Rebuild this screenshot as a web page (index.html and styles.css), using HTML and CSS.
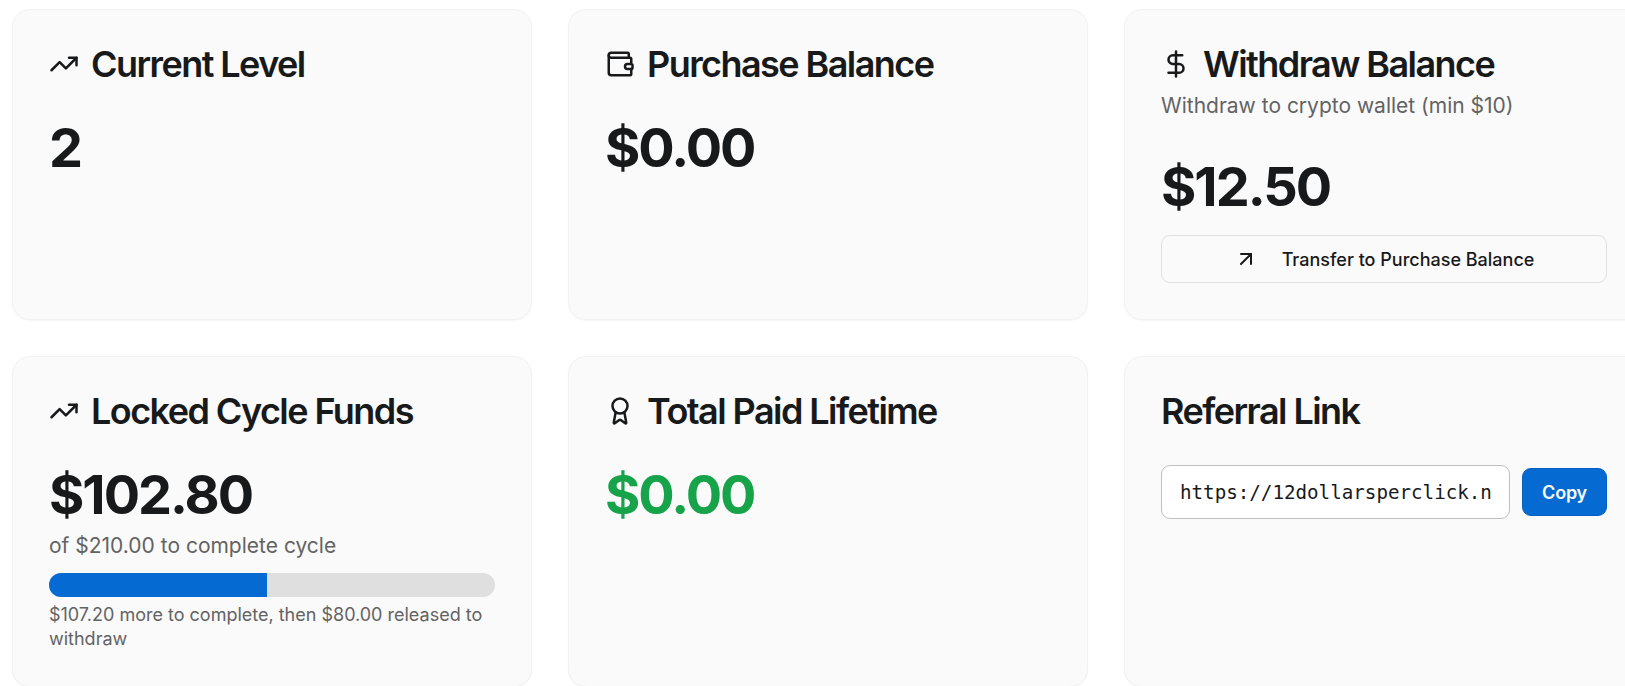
FILE: index.html
```
<!DOCTYPE html>
<html lang="en">
<head>
  <meta charset="UTF-8">
  <title>Dashboard</title>
  <link rel="stylesheet" href="styles.css">
</head>
<body>
  <div class="grid">
    <div class="card">
      <h3 class="title">
        <svg class="icon" viewBox="0 0 24 24"><path d="M22 7 13.5 15.5 8.5 10.5 2 17"/><path d="M16 7h6v6"/></svg>
        Current Level
      </h3>
      <div class="content">
        <div class="value">2</div>
      </div>
    </div>

    <div class="card">
      <h3 class="title">
        <svg class="icon" viewBox="0 0 24 24"><path d="M19 7V4a1 1 0 0 0-1-1H5a2 2 0 0 0 0 4h15a1 1 0 0 1 1 1v4h-3a2 2 0 0 0 0 4h3a1 1 0 0 0 1-1v-2a1 1 0 0 0-1-1"/><path d="M3 5v14a2 2 0 0 0 2 2h15a1 1 0 0 0 1-1v-4"/></svg>
        Purchase Balance
      </h3>
      <div class="content">
        <div class="value">$0.00</div>
      </div>
    </div>

    <div class="card">
      <h3 class="title">
        <svg class="icon" viewBox="0 0 24 24"><path d="M12 2v20"/><path d="M17 5H9.5a3.5 3.5 0 0 0 0 7h5a3.5 3.5 0 0 1 0 7H6"/></svg>
        Withdraw Balance
      </h3>
      <p class="description">Withdraw to crypto wallet (min $10)</p>
      <div class="content">
        <div class="value">$12.50</div>
        <button class="btn btn-outline">
          <svg class="icon-small" viewBox="0 0 24 24"><path d="M7 7h10v10"/><path d="M7 17 17 7"/></svg>
          Transfer to Purchase Balance
        </button>
      </div>
    </div>

    <div class="card">
      <h3 class="title">
        <svg class="icon" viewBox="0 0 24 24"><path d="M22 7 13.5 15.5 8.5 10.5 2 17"/><path d="M16 7h6v6"/></svg>
        Locked Cycle Funds
      </h3>
      <div class="content">
        <div class="value">$102.80</div>
        <p class="cycle">of $210.00 to complete cycle</p>
        <div class="progress"><div class="progress-bar" style="width: 48.95%"></div></div>
        <p class="note">$107.20 more to complete, then $80.00 released to withdraw</p>
      </div>
    </div>

    <div class="card">
      <h3 class="title">
        <svg class="icon" viewBox="0 0 24 24"><path d="m15.477 12.89 1.515 8.526a.5.5 0 0 1-.81.47l-3.58-2.687a1 1 0 0 0-1.197 0l-3.586 2.686a.5.5 0 0 1-.81-.469l1.514-8.526"/><circle cx="12" cy="8" r="6"/></svg>
        Total Paid Lifetime
      </h3>
      <div class="content">
        <div class="value green">$0.00</div>
      </div>
    </div>

    <div class="card">
      <h3 class="title">Referral Link</h3>
      <div class="content referral">
        <input class="link" type="text" value="https://12dollarsperclick.n" readonly>
        <button class="btn btn-primary">Copy</button>
      </div>
    </div>
  </div>
</body>
</html>
```

FILE: styles.css
```
* {
  box-sizing: border-box;
}
body {
  margin: 0;
  font-family: Inter, sans-serif;
  background: #fff;
  color: #18191b;
  overflow: hidden;
}
h3, p {
  margin: 0;
}
.grid {
  display: grid;
  grid-template-columns: repeat(3, 520px);
  grid-template-rows: 311px 331px;
  gap: 36px;
  padding: 9px 12px;
}
.card {
  padding: 36px;
  background: #fafafa;
  border: 1px solid #f2f2f2;
  border-radius: 18px;
  box-shadow: 0 1px 2px rgba(0, 0, 0, 0.04);
}
.title {
  display: flex;
  align-items: center;
  gap: 12px;
  font-size: 36px;
  line-height: 36px;
  font-weight: 600;
  letter-spacing: -1.56px;
}
.icon, .icon-small {
  width: 30px;
  height: 30px;
  fill: none;
  stroke: currentColor;
  stroke-width: 2;
  stroke-linecap: round;
  stroke-linejoin: round;
}
.icon-small {
  width: 24px;
  height: 24px;
}
.description, .cycle {
  font-size: 21px;
  line-height: 30px;
  color: #636363;
}
.description {
  margin-top: 9px;
}
.content {
  margin-top: 36px;
}
.value {
  font-size: 54px;
  line-height: 60px;
  font-weight: 700;
  letter-spacing: -2px;
}
.green {
  color: #16a34a;
}
.btn {
  display: flex;
  align-items: center;
  justify-content: center;
  height: 48px;
  font-family: inherit;
  font-size: 18px;
  font-weight: 500;
  border-radius: 9px;
}
.btn-outline {
  width: 100%;
  margin-top: 18px;
  gap: 24px;
  color: #18191b;
  background: transparent;
  border: 1px solid #e0e0e0;
}
.btn-primary {
  padding: 0 19px;
  font-weight: 600;
  letter-spacing: -0.2px;
  color: #f8fafc;
  background: #056bd2;
  border: 1px solid #0560bd;
}
.cycle {
  margin-top: 6px;
}
.progress {
  height: 24px;
  margin-top: 12px;
  background: #dfdfdf;
  border-radius: 12px;
  overflow: hidden;
}
.progress-bar {
  height: 100%;
  background: #056bd2;
}
.note {
  margin-top: 6px;
  font-size: 18px;
  line-height: 24px;
  color: #636363;
}
.referral {
  display: flex;
  align-items: center;
  gap: 12px;
}
.link {
  flex: 1;
  min-width: 0;
  height: 54px;
  padding: 0 18px;
  font-family: "DejaVu Sans Mono", monospace;
  font-size: 19.2px;
  color: #18191b;
  background: #fff;
  border: 1px solid #bfbfbf;
  border-radius: 9px;
}
```
